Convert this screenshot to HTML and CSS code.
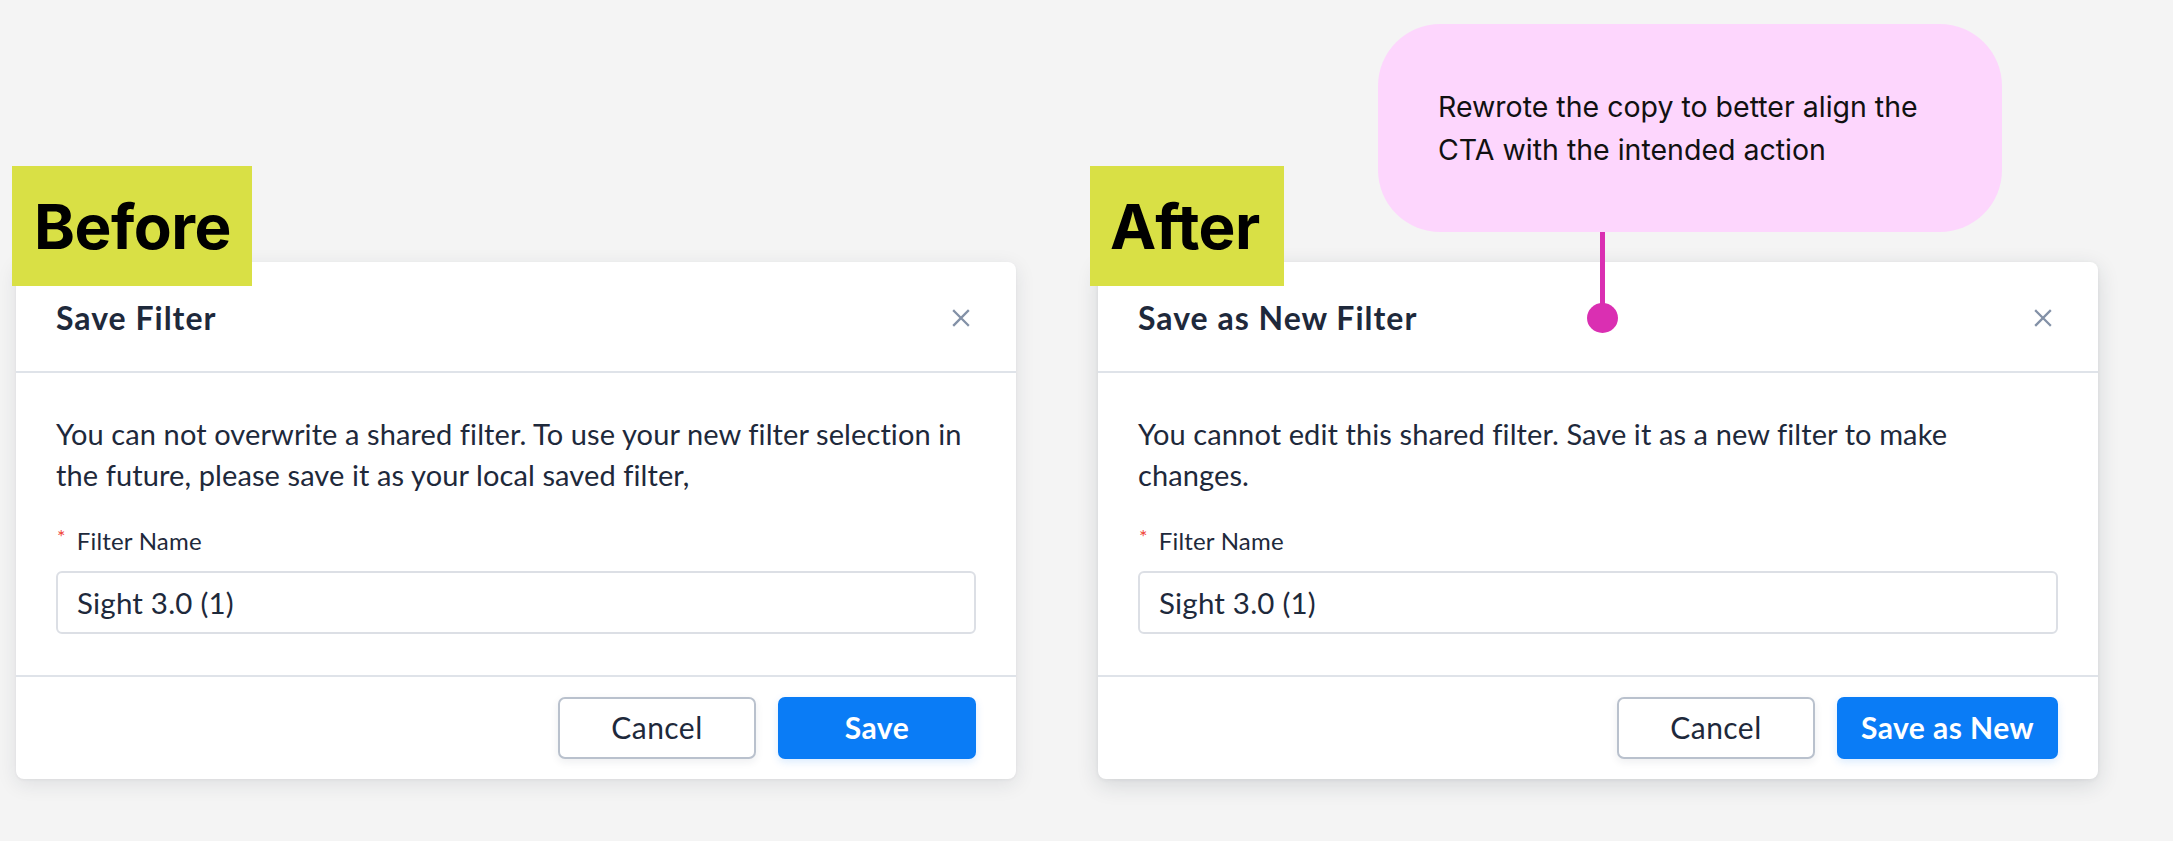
FILE: index.html
```html
<!DOCTYPE html>
<html lang="en">
<head>
<meta charset="utf-8">
<title>Before / After</title>
<link rel="stylesheet" href="styles.css">
</head>
<body>
<main class="page">
  <section class="panel panel-before">
    <div class="tag tag-before">Before</div>
    <div class="dialog">
      <header class="dialog-head">
        <h2 class="dialog-title">Save Filter</h2>
        <button class="close" aria-label="Close">
          <svg width="18" height="18" viewBox="0 0 18 18"><path d="M2 2L16 16M16 2L2 16" stroke="#8391a7" stroke-width="2.3" stroke-linecap="square"/></svg>
        </button>
      </header>
      <div class="dialog-body">
        <p class="message">You can not overwrite a shared filter. To use your new filter selection in the future, please save it as your local saved filter,</p>
        <label class="field-label"><span class="req">*</span>Filter Name</label>
        <div class="input">Sight 3.0 (1)</div>
      </div>
      <footer class="dialog-foot">
        <button class="btn btn-secondary">Cancel</button>
        <button class="btn btn-primary">Save</button>
      </footer>
    </div>
  </section>

  <section class="panel panel-after">
    <div class="tag tag-after">After</div>
    <div class="callout">
      <p class="callout-text">Rewrote the copy to better align the CTA with the intended action</p>
      <span class="pin"></span>
    </div>
    <div class="dialog dialog-raised">
      <header class="dialog-head">
        <h2 class="dialog-title">Save as New Filter</h2>
        <button class="close" aria-label="Close">
          <svg width="18" height="18" viewBox="0 0 18 18"><path d="M2 2L16 16M16 2L2 16" stroke="#8391a7" stroke-width="2.3" stroke-linecap="square"/></svg>
        </button>
      </header>
      <div class="dialog-body">
        <p class="message">You cannot edit this shared filter. Save it as a new filter to make changes.</p>
        <label class="field-label"><span class="req">*</span>Filter Name</label>
        <div class="input">Sight 3.0 (1)</div>
      </div>
      <footer class="dialog-foot">
        <button class="btn btn-secondary">Cancel</button>
        <button class="btn btn-primary">Save as New</button>
      </footer>
    </div>
  </section>
</main>
</body>
</html>
```

FILE: styles.css
```css
* { box-sizing: border-box; }
html, body { margin: 0; padding: 0; }
body {
  background: #f4f4f4;
  font-family: Lato, "Noto Sans", sans-serif;
  color: #1e293b;
  width: 2173px;
  height: 841px;
  overflow: hidden;
}
.page {
  display: flex;
  gap: 82px;
  padding-left: 16px;
}
.panel {
  position: relative;
  width: 1000px;
  padding-top: 262px;
}
.tag {
  position: absolute;
  top: 166px;
  height: 120px;
  background: #d9e045;
  color: #000;
  font-family: Inter, sans-serif;
  font-weight: 700;
  font-size: 62px;
  display: flex;
  align-items: center;
  z-index: 2;
  letter-spacing: -0.5px;
}
.tag-before { left: -4px; width: 240px; padding-left: 22px; }
.tag-after { left: -8px; width: 194px; padding-left: 20px; }

.callout {
  position: absolute;
  left: 280px;
  top: 24px;
  width: 624px;
  height: 208px;
  background: #fdd6fd;
  border-radius: 62px;
  padding: 0 60px;
  display: flex;
  align-items: center;
  z-index: 2;
}
.callout-text {
  margin: 0;
  font-family: Inter, sans-serif;
  font-size: 28.5px;
  line-height: 43px;
  color: #111;
}
.pin {
  position: absolute;
  left: 222px;
  top: 208px;
  width: 5px;
  height: 80px;
  background: #da2fb2;
}
.pin::after {
  content: "";
  position: absolute;
  left: -13px;
  top: 71px;
  width: 31px;
  height: 30px;
  border-radius: 50%;
  background: #da2fb2;
}

.dialog {
  background: #fff;
  border-radius: 8px;
  box-shadow: 0 5px 20px rgba(30, 41, 59, 0.10), 0 1px 3px rgba(30, 41, 59, 0.05);
  height: 517px;
  display: flex;
  flex-direction: column;
}
.dialog-raised {
  box-shadow: 0 6px 22px rgba(30, 41, 59, 0.14), 0 1px 4px rgba(30, 41, 59, 0.06);
}
.dialog-head {
  height: 111px;
  flex: none;
  display: flex;
  align-items: center;
  justify-content: space-between;
  padding: 2px 46px 0 40px;
  border-bottom: 2px solid #dfe3e9;
}
.dialog-title {
  margin: 0;
  font-size: 32px;
  font-weight: 700;
  letter-spacing: 1px;
  color: #1e293b;
}
.close {
  border: 0;
  background: none;
  padding: 0;
  width: 18px;
  height: 18px;
  display: flex;
}
.dialog-body {
  flex: none;
  padding: 40px 40px 0;
  height: 304px;
  border-bottom: 2px solid #dfe3e9;
}
.message {
  margin: 0;
  font-size: 29px;
  letter-spacing: 0.1px;
  line-height: 41px;
  color: #1e293b;
}
.field-label {
  display: flex;
  align-items: flex-start;
  margin-top: 30px;
  height: 32px;
  line-height: 32px;
  font-size: 24px;
  letter-spacing: 0.2px;
  color: #1e293b;
}
.req {
  color: #f0453a;
  font-size: 20px;
  line-height: 22px;
  margin-right: 11px;
  margin-left: 1px;
}
.input {
  margin-top: 14px;
  height: 63px;
  border: 2px solid #dcdfe5;
  border-radius: 6px;
  padding: 0 19px;
  display: flex;
  align-items: center;
  font-size: 29.5px;
  letter-spacing: 0.2px;
  color: #1e293b;
}
.dialog-foot {
  flex: 1;
  display: flex;
  justify-content: flex-end;
  align-items: center;
  gap: 22px;
  padding: 0 40px;
}
.btn {
  height: 62px;
  min-width: 198px;
  padding: 0 24px 2px;
  border-radius: 7px;
  font-family: Lato, "Noto Sans", sans-serif;
  font-size: 30px;
  letter-spacing: 0.45px;
}
.btn-secondary {
  background: #fff;
  border: 2px solid #b9c1cd;
  color: #1e293b;
  font-weight: 400;
  box-shadow: 0 3px 8px rgba(30, 41, 59, 0.08);
}
.btn-primary {
  background: #0a7cf6;
  border: 0;
  color: #fff;
  font-weight: 700;
  box-shadow: 0 3px 8px rgba(10, 124, 246, 0.15);
}
```
